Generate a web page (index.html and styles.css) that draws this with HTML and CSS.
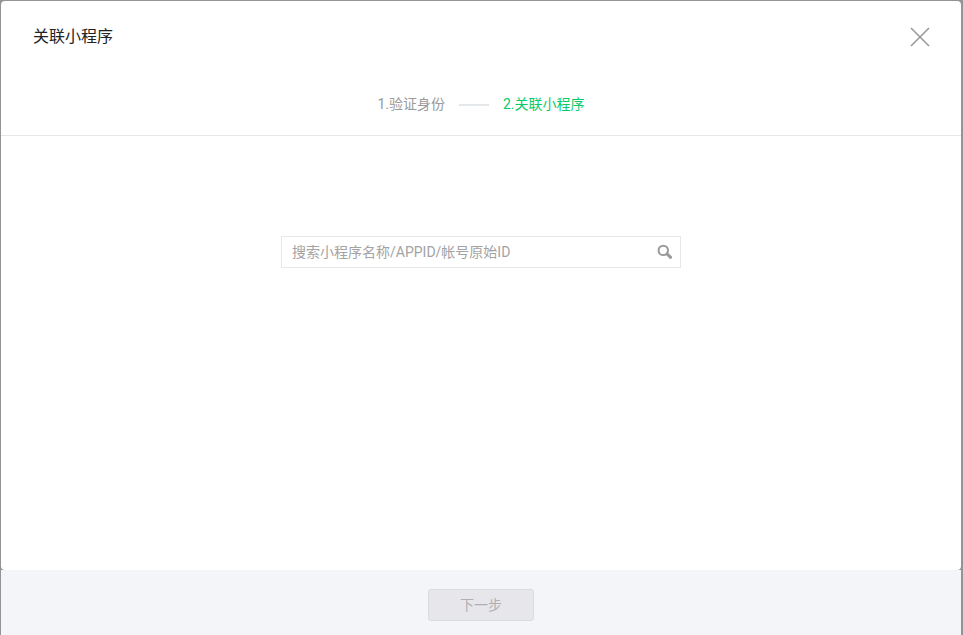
FILE: index.html
```html
<!DOCTYPE html>
<html lang="zh-CN">
<head>
  <meta charset="UTF-8" />
  <meta name="viewport" content="width=device-width, initial-scale=1.0"/>
  <title>关联小程序</title>
  <link rel="stylesheet" href="styles.css">
</head>
<body>
  <form class="dialog">
    <div class="panel">
      <header class="dialog-header">
        <h1>关联小程序</h1>
        <button type="button" class="close-btn" aria-label="关闭">
          <svg width="20" height="20" viewBox="0 0 20 20" fill="none" stroke="#9a9a9a" stroke-width="1.6">
            <path d="M1 1L19 19M19 1L1 19"/>
          </svg>
        </button>
      </header>

      <ol class="steps">
        <li>1.验证身份</li>
        <li class="current">2.关联小程序</li>
      </ol>

      <div class="dialog-body">
        <div class="search-box">
          <input type="text" id="keyword" aria-label="搜索小程序" placeholder="搜索小程序名称/APPID/帐号原始ID">
          <button type="button" class="search-btn" aria-label="搜索">
            <svg width="16" height="16" viewBox="0 0 16 16" fill="none" stroke="#9a9a9a">
              <circle cx="6.3" cy="6.4" r="4.7" stroke-width="2"/>
              <path d="M10 9.8L13.6 13.3" stroke-width="3" stroke-linecap="round"/>
            </svg>
          </button>
        </div>
      </div>
    </div>

    <footer class="dialog-footer">
      <button type="submit" class="next-btn" disabled>下一步</button>
    </footer>
  </form>
</body>
</html>
```

FILE: styles.css
```css
* {
  box-sizing: border-box;
}

body {
  margin: 0;
  font-family: Roboto, "Noto Sans CJK SC", sans-serif;
  font-size: 14px;
  line-height: 20px;
  color: #222;
  background-color: #949494;
}

button,
input {
  font: inherit;
}

.dialog {
  display: flex;
  flex-direction: column;
  min-height: 100vh;
  padding: 1px 2px 0 1px;
}

.panel {
  display: flex;
  flex-direction: column;
  flex: 1;
  background-color: #fff;
  border-radius: 4px;
}

.dialog-header {
  display: flex;
  justify-content: space-between;
  align-items: center;
  height: 72px;
  padding: 0 31px 0 32px;
}

h1 {
  margin: 0;
  font-size: 16px;
  font-weight: 400;
}

.close-btn,
.search-btn {
  display: flex;
  padding: 0;
  border: none;
  background: none;
  cursor: pointer;
}

.steps {
  display: flex;
  justify-content: center;
  align-items: center;
  margin: 0;
  padding: 21px 0;
  list-style: none;
  color: #9a9a9a;
  border-bottom: 1px solid #e4e8eb;
}

.steps li {
  display: flex;
  align-items: center;
}

.steps li + li::before {
  content: "";
  width: 30px;
  height: 2px;
  margin: 2px 14px 0;
  background-color: #e4e8eb;
}

.steps .current {
  color: #07cb69;
}

.dialog-body {
  flex: 1;
  padding: 100px 20px;
}

.search-box {
  display: flex;
  align-items: center;
  max-width: 400px;
  height: 32px;
  margin: 0 auto;
  padding: 0 7px 0 10px;
  border: 1px solid #e4e8eb;
}

.search-box input {
  flex: 1;
  min-width: 0;
  padding: 0;
  border: none;
  outline: none;
  color: #222;
  background: none;
}

.search-box input::placeholder {
  color: #a3a3a3;
}

.dialog-footer {
  display: flex;
  justify-content: center;
  padding: 19px 20px 14px;
  background-color: #f4f5f9;
}

.next-btn {
  min-width: 106px;
  height: 32px;
  padding: 0 20px;
  border: 1px solid #dadbe0;
  border-radius: 3px;
  color: #b0b0b3;
  background-color: #e6e6eb;
}
```
